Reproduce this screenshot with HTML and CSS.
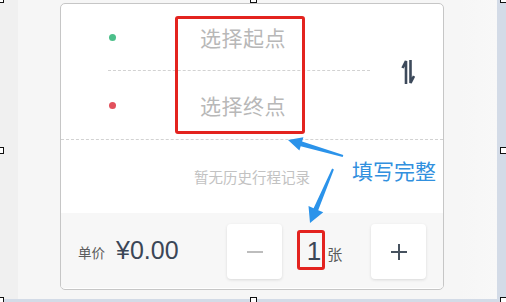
FILE: index.html
```html
<!DOCTYPE html>
<html lang="zh-CN">
<head>
  <meta charset="UTF-8">
  <title>选择起终点</title>
  <link rel="stylesheet" href="styles.css">
</head>
<body>
  <div class="stage">
    <div class="card">
      <div class="route">
        <div class="points">
          <div class="point">
            <span class="dot start"></span>
            <span class="place">选择起点</span>
          </div>
          <div class="point">
            <span class="dot end"></span>
            <span class="place">选择终点</span>
          </div>
        </div>
        <svg class="swap" width="14" height="26" viewBox="0 0 14 26">
          <path d="M5 25V2L1.5 9" fill="none" stroke="#3d4a5b" stroke-width="2.6"/>
          <path d="M9.5 1V24L13 17" fill="none" stroke="#3d4a5b" stroke-width="2.6"/>
        </svg>
      </div>
      <div class="history">暂无历史行程记录</div>
      <div class="bar">
        <span class="label">单价</span>
        <span class="price">¥0.00</span>
        <div class="stepper">
          <div class="btn">
            <svg width="18" height="18" viewBox="0 0 18 18"><path d="M1 9H17" stroke="#bdbdbd" stroke-width="2"/></svg>
          </div>
          <div class="qty"><span class="num">1</span><span class="unit">张</span></div>
          <div class="btn">
            <svg width="18" height="18" viewBox="0 0 18 18"><path d="M1 9H17M9 1V17" stroke="#47525f" stroke-width="2"/></svg>
          </div>
        </div>
      </div>
    </div>

    <!-- annotation layer -->
    <div class="mark mark-route"></div>
    <div class="mark mark-qty"></div>
    <span class="note">填写完整</span>
    <svg class="arrows" width="506" height="302" viewBox="0 0 506 302">
      <polygon points="288,140 303.4,137.2 302.1,141.5 343.3,155 342.7,157 300.7,146.3 299.4,150.6" fill="#2b93ea"/>
      <polygon points="310,223 308.5,206.1 313.6,208.2 332.1,168.6 333.9,169.4 318.2,210.2 323.3,212.3" fill="#2b93ea"/>
    </svg>
    <span class="handle h1"></span>
    <span class="handle h2"></span>
    <span class="handle h3"></span>
    <span class="handle h4"></span>
    <span class="handle h5"></span>
    <span class="handle h6"></span>
    <span class="handle h7"></span>
    <span class="handle h8"></span>
  </div>
</body>
</html>
```

FILE: styles.css
```css
* {
  box-sizing: border-box;
}
body {
  margin: 0;
  width: 506px;
  height: 302px;
  overflow: hidden;
  background: #d3dbe7;
  font-family: "Noto Sans CJK SC", sans-serif;
}
.stage {
  position: relative;
  width: 497px;
  height: 299px;
  padding: 3px 0 0 60px;
  background: linear-gradient(to right, #f0f0f0 0 18px, #f6f6f6 18px 460px, #f8f8f8);
}

.card {
  width: 384px;
  height: 287px;
  border: 1px solid #c6c6c6;
  border-radius: 5px;
  background: #fff;
  display: flex;
  flex-direction: column;
  overflow: hidden;
}

.route {
  display: flex;
  height: 136px;
  border-bottom: 1px dashed #d2d2d2;
}
.points {
  width: 262px;
  margin-left: 47px;
}
.point {
  display: flex;
  align-items: center;
  height: 68px;
  padding-left: 1px;
}
.point:first-child {
  height: 67px;
  border-bottom: 1px dashed #d2d2d2;
}
.dot {
  width: 7px;
  height: 7px;
  border-radius: 50%;
  margin-right: 84px;
}
.dot.start {
  background: #4cbf8a;
}
.dot.end {
  background: #e2505c;
}
.place {
  font-size: 21px;
  color: #b8b8b8;
  letter-spacing: 0.5px;
}
.swap {
  align-self: center;
  margin-left: 31px;
}

.history {
  height: 73px;
  display: flex;
  align-items: center;
  justify-content: center;
  font-size: 14.5px;
  color: #c2c2c2;
}

.bar {
  height: 75px;
  display: flex;
  align-items: center;
  padding: 0 17px;
  background: #f7f7f7;
}
.label {
  font-size: 13.5px;
  color: #5c5c5c;
  margin-top: 3px;
}
.price {
  margin-left: 11px;
  font-family: "Liberation Sans", sans-serif;
  font-size: 25px;
  color: #3b4656;
}
.stepper {
  margin-left: auto;
  display: flex;
  align-items: center;
  margin-top: 2px;
}
.btn {
  width: 55px;
  height: 55px;
  background: #fff;
  border-radius: 4px;
  box-shadow: 0 1px 3px rgba(0, 0, 0, .12);
  display: flex;
  align-items: center;
  justify-content: center;
}
.qty {
  width: 89px;
  display: flex;
  align-items: baseline;
  justify-content: center;
  padding-right: 4px;
}
.num {
  font-family: "Liberation Sans", sans-serif;
  font-size: 26px;
  color: #3b4656;
}
.unit {
  font-size: 15px;
  color: #5c5c5c;
  margin-left: 6px;
}

/* annotations laid over the screenshot */
.mark {
  position: absolute;
  border: 3px solid #e3231f;
  border-radius: 3px;
}
.mark-route {
  left: 175px;
  top: 16px;
  width: 130px;
  height: 118px;
}
.mark-qty {
  left: 297px;
  top: 230px;
  width: 28px;
  height: 40px;
}
.note {
  position: absolute;
  left: 352px;
  top: 156px;
  font-size: 21px;
  line-height: 28px;
  color: #3190de;
}
.arrows {
  position: absolute;
  left: 0;
  top: 0;
}
.handle {
  position: absolute;
  width: 7px;
  height: 7px;
  border: 1px solid #111;
  background: #fff;
}
.h1 { left: -3px; top: -4px; }
.h2 { left: 250px; top: -4px; }
.h3 { left: 500px; top: -4px; }
.h4 { left: -3px; top: 147px; }
.h5 { left: 500px; top: 147px; }
.h6 { left: -3px; top: 297px; }
.h7 { left: 250px; top: 297px; }
.h8 { left: 500px; top: 297px; }
```
